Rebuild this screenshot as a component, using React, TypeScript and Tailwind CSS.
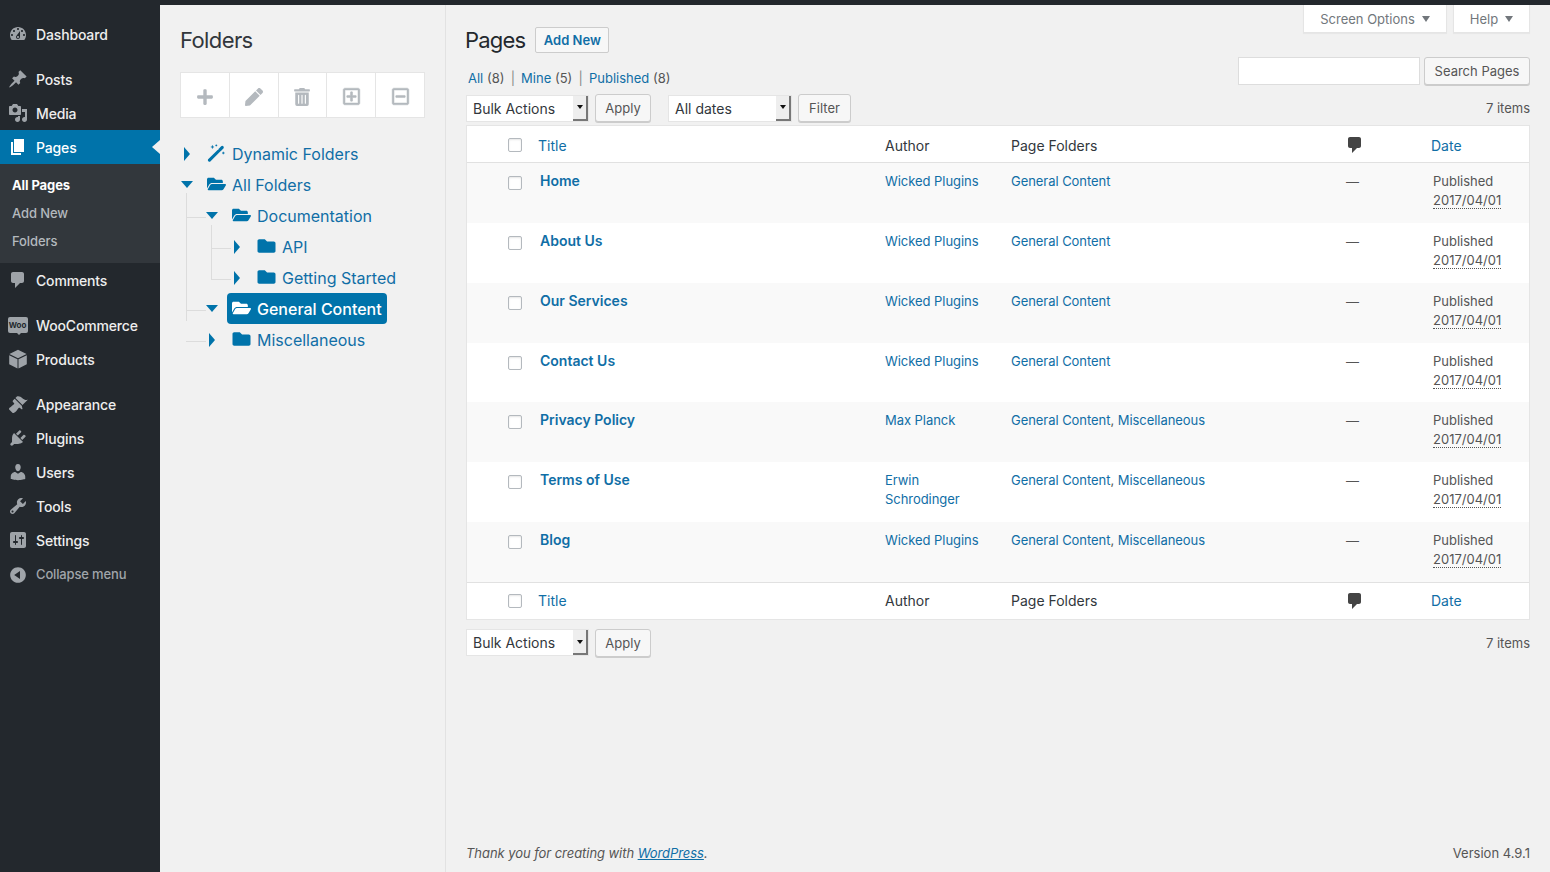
import React from "react";
import { FaFolder, FaFolderOpen, FaPlus, FaPen, FaTrashAlt, FaRegPlusSquare, FaRegMinusSquare } from "react-icons/fa";

const P = ({ d, className = "" }: { d: string; className?: string }) => (
  <svg viewBox="0 0 20 20" className={className} fill="currentColor" aria-hidden="true"><path d={d} /></svg>
);

const Wand = ({ className = "" }: { className?: string }) => (
  <svg viewBox="0 0 20 20" className={className} fill="none" stroke="currentColor" aria-hidden="true">
    <path d="M2.2 18 L12.4 7.8" strokeWidth="3.4" strokeLinecap="round" />
    <path d="M14 6.2 L16.4 3.8" strokeWidth="3.4" strokeLinecap="round" />
    <path d="M5.5 1.5v3.6M3.7 3.3h3.6M17.6 8.6v2.8M16.2 10h2.8M9.8.6v2M8.8 1.6h2" strokeWidth="1" />
  </svg>
);

const icons: Record<string, string> = {
  dashboard: "M3.76 16h12.48c1.1-1.37 1.76-3.11 1.76-5 0-4.42-3.58-8-8-8s-8 3.58-8 8c0 1.89.66 3.63 1.76 5zM10 4c.55 0 1 .45 1 1s-.45 1-1 1-1-.45-1-1 .45-1 1-1zM6 6c.55 0 1 .45 1 1s-.45 1-1 1-1-.45-1-1 .45-1 1-1zm8 0c.55 0 1 .45 1 1s-.45 1-1 1-1-.45-1-1 .45-1 1-1zm-5.37 5.55L12 7v6c0 1.1-.9 2-2 2s-2-.9-2-2c0-.57.24-1.08.63-1.45zM4 10c.55 0 1 .45 1 1s-.45 1-1 1-1-.45-1-1 .45-1 1-1zm12 0c.55 0 1 .45 1 1s-.45 1-1 1-1-.45-1-1 .45-1 1-1zm-5 3c0-.55-.45-1-1-1s-1 .45-1 1 .45 1 1 1 1-.45 1-1z",
  posts: "M10.44 3.02l1.82-1.82 6.36 6.35-1.83 1.82c-1.05-.68-2.48-.57-3.41.36l-.75.75c-.92.93-1.04 2.35-.35 3.41l-1.83 1.82-2.41-2.41-2.8 2.79c-.42.42-3.38 2.71-3.8 2.29s1.86-3.39 2.28-3.81l2.79-2.79L4.1 9.36l1.83-1.82c1.05.69 2.48.57 3.41-.36l.75-.75c.93-.92 1.04-2.35.35-3.41z",
  media: "M13 11V4c0-.55-.45-1-1-1h-1.67L9 1H5L3.67 3H2c-.55 0-1 .45-1 1v7c0 .55.45 1 1 1h10c.55 0 1-.45 1-1zM7 4.5c1.38 0 2.5 1.12 2.5 2.5S8.38 9.5 7 9.5 4.5 8.38 4.5 7 5.62 4.5 7 4.5zM14 6h5v10.5c0 1.38-1.12 2.5-2.5 2.5S14 17.88 14 16.5s1.12-2.5 2.5-2.5c.17 0 .34.02.5.05V9h-3V6zm-4 8.05V13h2v3.5c0 1.38-1.12 2.5-2.5 2.5S7 17.88 7 16.5 8.12 14 9.5 14c.17 0 .34.02.5.05z",
  pages: "M6 15V2h10v13H6zm-1 1h8v2H3V5h2v11z",
  comments: "M5 2h9c1.1 0 2 .9 2 2v7c0 1.1-.9 2-2 2h-2l-5 5v-5H5c-1.1 0-2-.9-2-2V4c0-1.1.9-2 2-2z",
  products: "M10 .8L18.6 5 10 9.2 1.4 5zM1.2 6.2L9.5 10.2V19.4L1.2 15.2zM18.8 6.2L10.5 10.2V19.4L18.8 15.2z",
  appearance: "M14.48 11.06L7.41 3.99l1.5-1.5c.5-.56 2.3-.47 3.51.32 1.21.8 1.43 1.28 2.91 2.1 1.18.64 2.45 1.26 4.45.85zm-.71.71L6.7 4.7 4.93 6.47c-.39.39-.39 1.02 0 1.41l1.06 1.06c.39.39.39 1.03 0 1.42-.6.6-1.43 1.11-2.21 1.69-.35.26-.7.53-1.01.84C1.43 13.23.4 14.85 1.15 15.6l3.25 3.25c.75.75 2.37-.28 3.7-1.62.31-.31.58-.66.84-1.01.58-.78 1.09-1.61 1.69-2.21.39-.39 1.03-.39 1.42 0l1.06 1.06c.39.39 1.02.39 1.41 0z",
  plugins: "M13.11 4.36L9.87 7.6 8 5.73l3.24-3.24c.35-.34 1.05-.2 1.56.32.52.51.66 1.21.31 1.55zm-8 1.77l.91-1.12 9.01 9.01-1.19.84c-.71.71-2.63 1.16-3.82 1.16H6.14L4.9 17.26c-.59.59-1.54.59-2.12 0-.59-.58-.59-1.53 0-2.12l1.24-1.24v-3.88c0-1.13.4-3.19 1.09-3.89zm7.26 3.97l3.24-3.24c.34-.35 1.04-.21 1.55.31.52.51.66 1.21.31 1.55l-3.24 3.25z",
  users: "M10 9.25c-2.27 0-2.73-3.44-2.73-3.44C7 4.02 7.82 2 9.97 2c2.16 0 2.98 2.02 2.71 3.81 0 0-.41 3.44-2.68 3.44zm0 2.57L12.72 10c2.39 0 4.52 2.33 4.52 4.53v2.49s-3.65 1.13-7.24 1.13c-3.65 0-7.24-1.13-7.24-1.13v-2.49c0-2.25 1.94-4.48 4.47-4.48z",
  tools: "M16.68 9.77c-1.34 1.34-3.3 1.67-4.95.99l-5.41 6.52c-.99.99-2.59.99-3.58 0s-.99-2.59 0-3.57l6.52-5.42c-.68-1.65-.35-3.61.99-4.95 1.28-1.28 3.12-1.62 4.72-1.06l-2.89 2.89 2.82 2.82 2.86-2.87c.53 1.58.18 3.39-1.08 4.65zM3.81 16.21c.4.39 1.04.39 1.43 0 .4-.4.4-1.04 0-1.43-.39-.4-1.03-.4-1.43 0-.39.39-.39 1.03 0 1.43z",
  settings: "M18 16V4c0-1.1-.9-2-2-2H4c-1.1 0-2 .9-2 2v12c0 1.1.9 2 2 2h12c1.1 0 2-.9 2-2zM8 11h1c.55 0 1 .45 1 1s-.45 1-1 1H8v1.5c0 .28-.22.5-.5.5s-.5-.22-.5-.5V13H6c-.55 0-1-.45-1-1s.45-1 1-1h1V5.5c0-.28.22-.5.5-.5s.5.22.5.5V11zm5-2h-1c-.55 0-1-.45-1-1s.45-1 1-1h1V5.5c0-.28.22-.5.5-.5s.5.22.5.5V7h1c.55 0 1 .45 1 1s-.45 1-1 1h-1v5.5c0 .28-.22.5-.5.5s-.5-.22-.5-.5V9z",
  collapse: "M10 2.16c4.33 0 7.84 3.51 7.84 7.84s-3.51 7.84-7.84 7.84S2.16 14.33 2.16 10 5.71 2.16 10 2.16zm2 11.72V6.12L6.18 9.97z",
};

function MenuItem({ icon, label, current }: { icon: string; label: string; current?: boolean }) {
  return (
    <div className={`relative flex h-[34px] items-center text-[14px] font-medium tracking-[-0.15px] ${current ? "bg-[#0073aa] text-white" : "text-[#eeeeee]"}`}>
      <div className={`flex w-[36px] justify-center pr-[1px] ${current ? "text-white" : "text-[#9ea3a8]"}`}>
        {icon === "woo" ? (
          <span className="relative flex h-[16px] w-[20px] items-center justify-center rounded-[2px] bg-[#9ea3a8] text-[8px] font-bold leading-none tracking-normal text-[#23282d]">
            Woo
            <span className="absolute -bottom-[2px] left-[9px] h-0 w-0 border-x-[2px] border-t-[2px] border-x-transparent border-t-[#9ea3a8]" />
          </span>
        ) : (
          <P d={icons[icon]} className="h-[20px] w-[20px]" />
        )}
      </div>
      <span>{label}</span>
      {current && (
        <span className="absolute right-0 top-[10px] h-0 w-0 border-y-[7px] border-r-[8px] border-y-transparent border-r-[#f1f1f1]" />
      )}
    </div>
  );
}

function Sidebar() {
  return (
    <aside className="flex w-[160px] shrink-0 flex-col bg-[#23282d] pt-[12px]">
      <MenuItem icon="dashboard" label="Dashboard" />
      <div className="h-[11px]" />
      <MenuItem icon="posts" label="Posts" />
      <MenuItem icon="media" label="Media" />
      <MenuItem icon="pages" label="Pages" current />
      <div className="flex h-[99px] flex-col bg-[#32373c] pl-[12px] pt-[8px] text-[13px] font-medium tracking-[-0.1px] text-[#b4b9be]">
        <div className="flex h-[28px] items-center font-bold text-white">All Pages</div>
        <div className="flex h-[28px] items-center">Add New</div>
        <div className="flex h-[28px] items-center">Folders</div>
      </div>
      <MenuItem icon="comments" label="Comments" />
      <div className="h-[11px]" />
      <MenuItem icon="woo" label="WooCommerce" />
      <MenuItem icon="products" label="Products" />
      <div className="h-[11px]" />
      <MenuItem icon="appearance" label="Appearance" />
      <MenuItem icon="plugins" label="Plugins" />
      <MenuItem icon="users" label="Users" />
      <MenuItem icon="tools" label="Tools" />
      <MenuItem icon="settings" label="Settings" />
      <div className="flex h-[34px] items-center pt-[1px] text-[13px] font-medium tracking-[-0.15px] text-[#a0a5aa]">
        <div className="flex w-[36px] justify-center pr-[1px]">
          <P d={icons.collapse} className="h-[20px] w-[20px]" />
        </div>
        <span>Collapse menu</span>
      </div>
    </aside>
  );
}

function Caret({ open }: { open?: boolean }) {
  return open ? (
    <span className="block h-0 w-0 border-x-[6px] border-t-[7px] border-x-transparent border-t-[#0073aa]" />
  ) : (
    <span className="block h-0 w-0 border-y-[7px] border-l-[6px] border-y-transparent border-l-[#0073aa]" />
  );
}

function TreeRow({ depth, open, icon, label, selected }: { depth: string; open?: boolean; icon: "wand" | "open" | "closed"; label: string; selected?: boolean }) {
  const Ico = icon === "wand" ? Wand : icon === "open" ? FaFolderOpen : FaFolder;
  return (
    <div className={`relative flex h-[31px] items-center ${depth}`}>
      <div className="flex w-[14px] justify-center"><Caret open={open} /></div>
      <div className={`ml-[8px] flex h-[31px] items-center rounded-[4px] ${selected ? "bg-[#0073aa] pr-[5px] text-white" : "text-[#0073aa]"}`}>
        <Ico className={`ml-[5px] h-[18px] w-[19px] -translate-y-[1px] ${selected ? "text-white" : "text-[#0073aa]"}`} />
        <span className={`ml-[6px] text-[16px] ${selected ? "font-medium" : "text-[#106ea6]"}`}>{label}</span>
      </div>
    </div>
  );
}

function Tree() {
  return (
    <div className="relative mt-[20px]">
      <span className="absolute left-[6px] top-[55px] h-[128px] w-px bg-[#dcdcdc]" />
      <span className="absolute left-[6px] top-[79px] h-px w-[20px] bg-[#dcdcdc]" />
      <span className="absolute left-[6px] top-[172px] h-px w-[20px] bg-[#dcdcdc]" />
      <span className="absolute left-[6px] top-[203px] h-px w-[20px] bg-[#dcdcdc]" />
      <span className="absolute left-[31px] top-[87px] h-[54px] w-px bg-[#dcdcdc]" />
      <span className="absolute left-[31px] top-[110px] h-px w-[20px] bg-[#dcdcdc]" />
      <span className="absolute left-[31px] top-[141px] h-px w-[20px] bg-[#dcdcdc]" />
      <TreeRow depth="pl-0" icon="wand" label="Dynamic Folders" />
      <TreeRow depth="pl-0" open icon="open" label="All Folders" />
      <TreeRow depth="pl-[25px]" open icon="open" label="Documentation" />
      <TreeRow depth="pl-[50px]" icon="closed" label="API" />
      <TreeRow depth="pl-[50px]" icon="closed" label="Getting Started" />
      <TreeRow depth="pl-[25px]" open icon="open" label="General Content" selected />
      <TreeRow depth="pl-[25px]" icon="closed" label="Miscellaneous" />
    </div>
  );
}

function FolderPanel() {
  const tools = [
    { T: FaPlus, c: "h-[18px] w-[18px]" },
    { T: FaPen, c: "h-[18px] w-[18px]" },
    { T: FaTrashAlt, c: "h-[18px] w-[18px]" },
    { T: FaRegPlusSquare, c: "h-[19px] w-[19px] stroke-[14px]" },
    { T: FaRegMinusSquare, c: "h-[19px] w-[19px] stroke-[14px]" },
  ];
  return (
    <section className="w-[286px] shrink-0 border-r border-[#e2e2e2] pl-[20px] pr-[20px]">
      <h2 className="mt-[20px] text-[22px] leading-[30px] tracking-[-0.6px] text-[#32373c]">Folders</h2>
      <div className="mt-[17px] flex h-[46px] w-[245px] border border-[#e5e5e5] bg-white">
        {tools.map(({ T, c }, i) => (
          <div key={i} className={`flex flex-1 items-center justify-center pt-[3px] text-[#b4b9be] ${i ? "border-l border-[#e5e5e5]" : ""}`}>
            <T className={c} />
          </div>
        ))}
      </div>
      <Tree />
    </section>
  );
}

function Btn({ children, className = "" }: { children: React.ReactNode; className?: string }) {
  return (
    <div className={`flex h-[28px] items-center justify-center rounded-[3px] border border-[#cccccc] bg-[#f7f7f7] pt-[1px] text-[13px] text-[#555555] shadow-[0_1px_0_#cccccc] ${className}`}>
      {children}
    </div>
  );
}

function Select({ label, className }: { label: string; className: string }) {
  return (
    <div className={`flex h-[27px] items-stretch border border-[#e5e5e5] bg-white text-[14px] text-[#32373c] ${className}`}>
      <span className="flex flex-1 items-center pl-[6px]">{label}</span>
      <span className="flex w-[15px] items-center justify-center border-b-2 border-r-2 border-[#777777] bg-[#eeeeee]">
        <span className="h-0 w-0 border-x-[3px] border-t-[4px] border-x-transparent border-t-[#111111]" />
      </span>
    </div>
  );
}

const Comment = () => <P d={icons.comments} className="h-[20px] w-[20px] text-[#444444]" />;
const Check = () => <span className="block h-[14px] w-[14px] rounded-[2px] border border-[#b4b9be] bg-white shadow-[inset_0_1px_2px_rgba(0,0,0,0.1)]" />;

const rows = [
  ["Home", "Wicked Plugins", ["General Content"]],
  ["About Us", "Wicked Plugins", ["General Content"]],
  ["Our Services", "Wicked Plugins", ["General Content"]],
  ["Contact Us", "Wicked Plugins", ["General Content"]],
  ["Privacy Policy", "Max Planck", ["General Content", "Miscellaneous"]],
  ["Terms of Use", "Erwin Schrodinger", ["General Content", "Miscellaneous"]],
  ["Blog", "Wicked Plugins", ["General Content", "Miscellaneous"]],
] as [string, string, string[]][];

function HeadRow({ bottom }: { bottom?: boolean }) {
  const cls = `h-[37px] bg-white text-left align-middle text-[14px] font-normal ${bottom ? "border-t" : "border-b pt-[2px]"} border-[#e1e1e1]`;
  return (
    <tr>
      <th className={`${cls} pl-[41px]`}><Check /></th>
      <th className={`${cls} pl-[8px] font-normal text-[#106ea6]`}>Title</th>
      <th className={`${cls} pl-[8px] font-normal text-[#32373c]`}>Author</th>
      <th className={`${cls} pl-[8px] font-normal text-[#32373c]`}>Page Folders</th>
      <th className={`${cls} pl-[13px]`}><Comment /></th>
      <th className={`${cls} pl-[8px] font-normal text-[#106ea6]`}>Date</th>
    </tr>
  );
}

function PostsTable() {
  return (
    <table className="mt-[3px] w-full table-fixed border-separate border-spacing-0 border border-[#e5e5e5] bg-white">
      <colgroup>
        <col className="w-[63px]" />
        <col className="w-[347px]" />
        <col className="w-[126px]" />
        <col className="w-[329px]" />
        <col className="w-[91px]" />
        <col />
      </colgroup>
      <thead><HeadRow /></thead>
      <tbody>
        {rows.map(([t, a, f], i) => (
          <tr key={t} className={`h-[59.85px] align-top text-[13px] leading-[19px] ${i % 2 ? "bg-white" : "bg-[#f9f9f9]"}`}>
            <td className="pl-[41px] pt-[13px]"><Check /></td>
            <td className="pl-[10px] pt-[8px] text-[14px] font-semibold leading-[19.5px] text-[#106ea6]">{t}</td>
            <td className="pl-[8px] pr-[20px] pt-[9px] tracking-[-0.05px] text-[#106ea6]">{a}</td>
            <td className="pl-[8px] pt-[9px] tracking-[-0.05px] text-[#555555]">
              {f.map((x, j) => (
                <React.Fragment key={x}>{j > 0 && ", "}<span className="text-[#106ea6]">{x}</span></React.Fragment>
              ))}
            </td>
            <td className="pl-[14px] pt-[10px] text-[#555555]">—</td>
            <td className="pl-[10px] pt-[9px] text-[#555555]">
              Published<br /><span className="border-b border-dotted border-[#555555]">2017/04/01</span>
            </td>
          </tr>
        ))}
      </tbody>
      <tfoot><HeadRow bottom /></tfoot>
    </table>
  );
}

function Main() {
  return (
    <main className="flex min-w-0 flex-1 flex-col px-[20px]">
      <div className="flex h-[28px] justify-end gap-[6px]">
        {[["Screen Options", "w-[144px]"], ["Help", "w-[77px]"]].map(([t, w]) => (
          <div key={t} className={`flex items-center justify-center gap-[7px] border border-t-0 border-[#e5e5e5] bg-white pt-[2px] text-[13px] text-[#72777c] shadow-[0_1px_1px_rgba(0,0,0,0.04)] ${w}`}>
            {t}
            <span className="h-0 w-0 -translate-y-[1px] border-x-[4px] border-t-[6px] border-x-transparent border-t-[#72777c]" />
          </div>
        ))}
      </div>
      <div className="-mt-[6px] flex h-[26px] items-center">
        <h1 className="-ml-[1px] text-[22px] leading-[26px] tracking-[-0.8px] text-[#23282d]">Pages</h1>
        <div className="ml-[10px] flex h-[26px] w-[74px] items-center justify-center rounded-[2px] border border-[#cccccc] bg-[#f7f7f7] pt-[1px] text-[13px] font-semibold text-[#106ea6]">Add New</div>
      </div>
      <div className="mt-[4px] flex h-[28px] items-start justify-between">
        <div className="mt-[12px] pl-[2px] text-[13px] leading-[18px] text-[#555555]">
          <span className="text-[#106ea6]">All</span> (8) <span className="mx-[2.5px] text-[#888888]">|</span> <span className="text-[#106ea6]">Mine</span> (5) <span className="mx-[2.5px] text-[#888888]">|</span> <span className="text-[#106ea6]">Published</span> (8)
        </div>
        <div className="flex gap-[4px]">
          <div className="h-[28px] w-[182px] border border-[#dddddd] bg-white" />
          <Btn className="w-[106px]">Search Pages</Btn>
        </div>
      </div>
      <div className="mt-[9px] flex h-[28px] items-center">
        <Select label="Bulk Actions" className="w-[123px]" />
        <Btn className="ml-[6px] w-[56px]">Apply</Btn>
        <Select label="All dates" className="ml-[17px] w-[124px]" />
        <Btn className="ml-[6px] w-[53px]">Filter</Btn>
        <span className="ml-auto pt-[1px] text-[13px] text-[#555555]">7 items</span>
      </div>
      <PostsTable />
      <div className="mt-[9px] flex h-[28px] items-center">
        <Select label="Bulk Actions" className="w-[123px]" />
        <Btn className="ml-[6px] w-[56px]">Apply</Btn>
        <span className="ml-auto pt-[1px] text-[13px] text-[#555555]">7 items</span>
      </div>
      <footer className="mt-auto flex justify-between pb-[9px] text-[13px] leading-[19px] text-[#555555]">
        <span className="italic tracking-[-0.06px]">Thank you for creating with <span className="text-[#106ea6] underline">WordPress</span>.</span>
        <span>Version 4.9.1</span>
      </footer>
    </main>
  );
}

export default function App() {
  return (
    <div className="flex h-screen flex-col overflow-hidden bg-[#f1f1f1] font-['Inter','Liberation_Sans',sans-serif]">
      <div className="h-[5px] shrink-0 bg-[#23282d]" />
      <div className="flex min-h-0 flex-1">
        <Sidebar />
        <FolderPanel />
        <Main />
      </div>
    </div>
  );
}
